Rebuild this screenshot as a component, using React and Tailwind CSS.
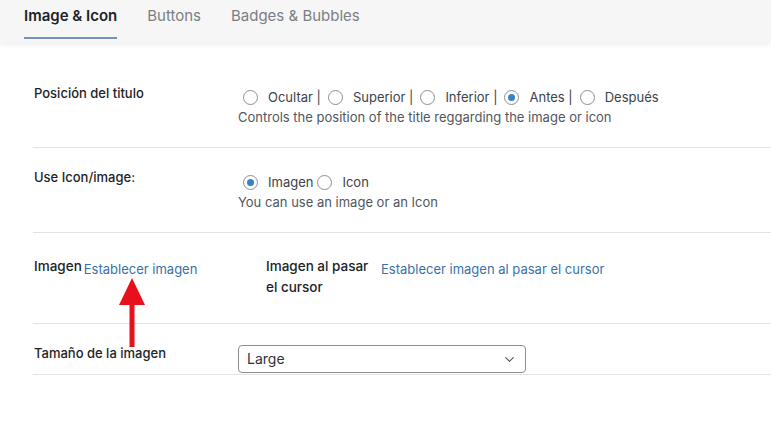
import { ChevronDown } from 'lucide-react';

const TABS = ['Image & Icon', 'Buttons', 'Badges & Bubbles'];
const POSITIONS = [
  { label: 'Ocultar |', checked: false },
  { label: 'Superior |', checked: false },
  { label: 'Inferior |', checked: false },
  { label: 'Antes |', checked: true },
  { label: 'Después', checked: false },
];

function Radio({ checked }) {
  return (
    <span className="mr-[10px] inline-flex h-[15px] w-[15px] shrink-0 items-center justify-center rounded-full border border-[#8c8f94] bg-white">
      {checked && <span className="h-[7px] w-[7px] rounded-full bg-[#3582c4]" />}
    </span>
  );
}

function Row({ label, children, className = '' }) {
  return (
    <div className={`flex border-b border-[#e3e3e5] ${className}`}>
      <div className="w-[205px] shrink-0 text-[13px] font-medium text-[#1d2327]">{label}</div>
      <div className="flex-1">{children}</div>
    </div>
  );
}

export default function App() {
  return (
    <div
      className="relative h-[448px] w-[771px] overflow-hidden bg-white"
      style={{ fontFamily: 'Inter, "Noto Sans", sans-serif' }}
    >
      {/* tabs */}
      <div className="relative z-10 flex h-[43px] gap-[30px] bg-[#f6f6f7] pl-6 shadow-[0_2px_5px_rgba(0,0,0,0.07)]">
        {TABS.map((t, i) => (
          <div
            key={t}
            className={`relative pt-[6px] text-[15px] leading-5 ${
              i === 0 ? 'font-semibold text-[#1d2327]' : 'text-[#7b7f84]'
            }`}
          >
            {t}
            {i === 0 && <span className="absolute left-0 right-0 top-[37px] h-[2px] bg-[#7392c2]" />}
          </div>
        ))}
      </div>

      <div className="pl-[33px] pt-[20px] text-[13px] leading-5">
        <Row label={<div className="pt-[20px] pl-px">Posición del titulo</div>} className="pb-[20px]">
          <div className="pt-[24px]">
            <div className="flex items-center pl-[5px] text-[#3c434a]">
              {POSITIONS.map((p) => (
                <span key={p.label} className="mr-[7px] inline-flex items-center">
                  <Radio checked={p.checked} />
                  {p.label}
                </span>
              ))}
            </div>
            <div className="text-[#50575e]">Controls the position of the title reggarding the image or icon</div>
          </div>
        </Row>

        <Row label={<div className="pt-[19px] pl-px">Use Icon/image:</div>} className="pb-[20px]">
          <div className="pt-[24px]">
            <div className="flex items-center pl-[5px] text-[#3c434a]">
              <Radio checked />
              <span className="mr-[4px]">Imagen</span>
              <Radio />
              Icon
            </div>
            <div className="text-[#50575e]">You can use an image or an Icon</div>
          </div>
        </Row>

        <div className="flex h-[91px] border-b border-[#e3e3e5] pt-[23px]">
          <div className="w-[233px] shrink-0 pl-px">
            <span className="text-[13.5px] font-medium text-[#1d2327]">Imagen</span>
            <span className="relative top-[3px] ml-[2px] text-[#3872a8]">Establecer imagen</span>
          </div>
          <div className="w-[115px] shrink-0 text-[13.5px] font-medium leading-[21px] text-[#1d2327]">
            Imagen al pasar el cursor
          </div>
          <div className="pt-[3px] text-[#3872a8]">Establecer imagen al pasar el cursor</div>
        </div>

        <Row label={<div className="pt-[19px] pl-px">Tamaño de la imagen</div>} className="pb-px">
          <div className="pt-[21px]">
            <div className="flex h-[28px] w-[288px] items-center justify-between rounded-[4px] border border-[#8c8f94] pl-[8px] pr-[8px] text-[14px] text-[#2c3338]">
              Large
              <ChevronDown size={15} strokeWidth={1.75} className="text-[#50575e]" />
            </div>
          </div>
        </Row>
      </div>

      {/* red arrow annotation */}
      <svg className="absolute left-[118px] top-[278px]" width="28" height="70" viewBox="0 0 28 70">
        <polygon points="14,0 27,27 1,27" fill="#e8101a" />
        <rect x="11.5" y="25" width="5" height="44" fill="#e8101a" />
      </svg>
    </div>
  );
}
